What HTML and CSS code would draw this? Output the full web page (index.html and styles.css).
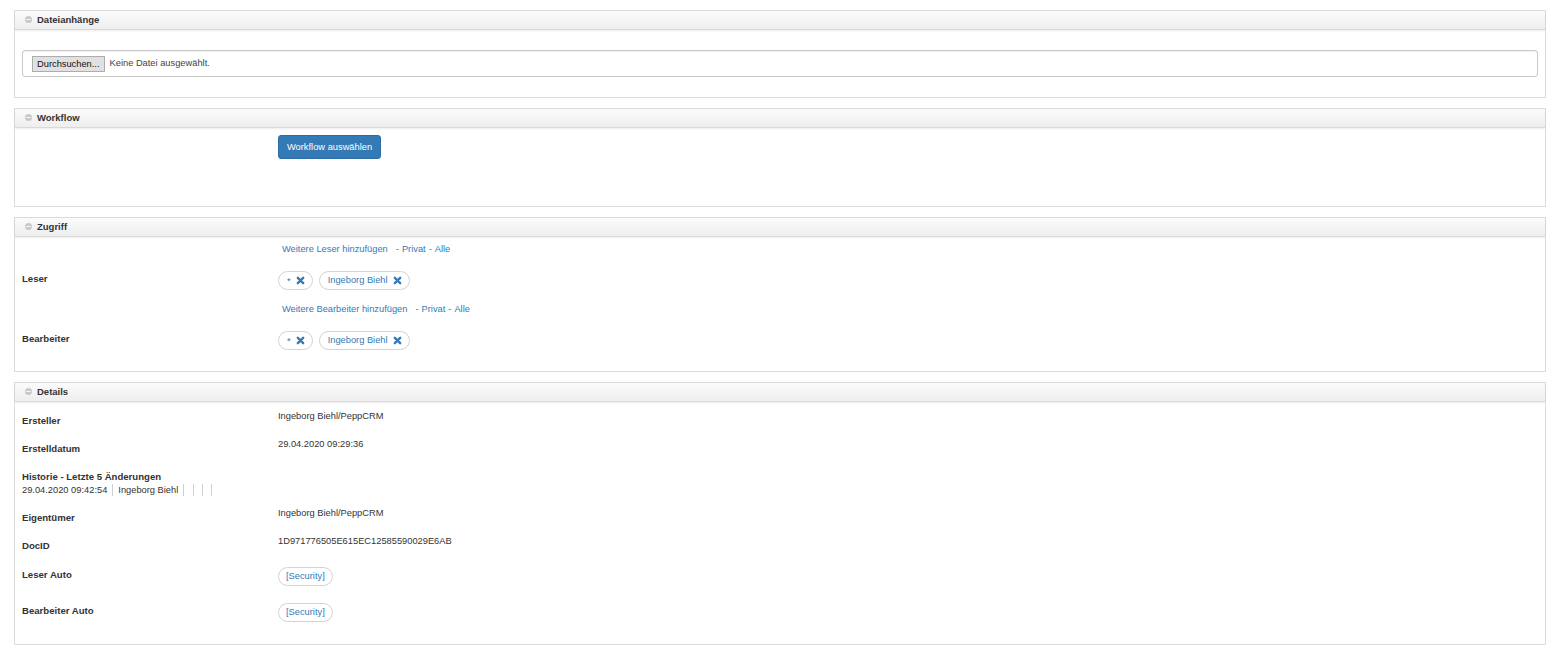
FILE: index.html
```html
<!DOCTYPE html>
<html lang="de">
<head>
<meta charset="utf-8">
<title>Dokument</title>
<link rel="stylesheet" href="styles.css">
</head>
<body>
<div class="page">

  <section class="panel">
    <header class="panel-head"><span class="collapse-icon"></span><span class="panel-title">Dateianhänge</span></header>
    <div class="panel-body body-files">
      <div class="file-box">
        <span class="file-btn">Durchsuchen...</span>
        <span class="file-name">Keine Datei ausgewählt.</span>
      </div>
    </div>
  </section>

  <section class="panel">
    <header class="panel-head"><span class="collapse-icon"></span><span class="panel-title">Workflow</span></header>
    <div class="panel-body body-workflow">
      <div class="field">
        <div class="label"></div>
        <div class="value"><span class="btn-primary">Workflow auswählen</span></div>
      </div>
    </div>
  </section>

  <section class="panel">
    <header class="panel-head"><span class="collapse-icon"></span><span class="panel-title">Zugriff</span></header>
    <div class="panel-body body-access">
      <div class="field access-group">
        <div class="label access-label">Leser</div>
        <div class="value">
          <div class="links"><a class="link">Weitere Leser hinzufügen</a><span class="sep-dash">-</span><a class="link">Privat</a><span class="sep-dash">-</span><a class="link">Alle</a></div>
          <div class="chips">
            <span class="chip"><span class="chip-star">*</span><svg class="x" viewBox="0 0 10 10"><path d="M2 2L8 8M8 2L2 8"/></svg></span>
            <span class="chip">Ingeborg Biehl<svg class="x" viewBox="0 0 10 10"><path d="M2 2L8 8M8 2L2 8"/></svg></span>
          </div>
        </div>
      </div>
      <div class="field access-group second">
        <div class="label access-label">Bearbeiter</div>
        <div class="value">
          <div class="links"><a class="link">Weitere Bearbeiter hinzufügen</a><span class="sep-dash">-</span><a class="link">Privat</a><span class="sep-dash">-</span><a class="link">Alle</a></div>
          <div class="chips">
            <span class="chip"><span class="chip-star">*</span><svg class="x" viewBox="0 0 10 10"><path d="M2 2L8 8M8 2L2 8"/></svg></span>
            <span class="chip">Ingeborg Biehl<svg class="x" viewBox="0 0 10 10"><path d="M2 2L8 8M8 2L2 8"/></svg></span>
          </div>
        </div>
      </div>
    </div>
  </section>

  <section class="panel">
    <header class="panel-head"><span class="collapse-icon"></span><span class="panel-title">Details</span></header>
    <div class="panel-body body-details">
      <div class="field drow">
        <div class="label">Ersteller</div>
        <div class="value">Ingeborg Biehl/PeppCRM</div>
      </div>
      <div class="field drow">
        <div class="label">Erstelldatum</div>
        <div class="value">29.04.2020 09:29:36</div>
      </div>
      <div class="drow history">
        <div class="label">Historie - Letzte 5 Änderungen</div>
        <div class="history-line"><span class="hist-item">29.04.2020 09:42:54</span><span class="hist-item">Ingeborg Biehl</span><span class="hist-item"></span><span class="hist-item"></span><span class="hist-item last"></span></div>
      </div>
      <div class="field drow">
        <div class="label">Eigentümer</div>
        <div class="value">Ingeborg Biehl/PeppCRM</div>
      </div>
      <div class="field drow">
        <div class="label">DocID</div>
        <div class="value">1D971776505E615EC12585590029E6AB</div>
      </div>
      <div class="field drow chiprow">
        <div class="label">Leser Auto</div>
        <div class="value"><span class="chip">[Security]</span></div>
      </div>
      <div class="field drow chiprow">
        <div class="label">Bearbeiter Auto</div>
        <div class="value"><span class="chip">[Security]</span></div>
      </div>
    </div>
  </section>

</div>
</body>
</html>
```

FILE: styles.css
```css
* { box-sizing: border-box; }

body {
  margin: 0;
  background: #fff;
  font-family: "Liberation Sans", Arial, sans-serif;
  font-size: 9.3px;
  line-height: 13px;
  color: #333;
}

.page {
  padding: 10px 15px 0 14px;
}

.panel {
  border: 1px solid #dcdcdc;
  margin-bottom: 10px;
  background: #fff;
}

.panel-head {
  height: 19px;
  display: flex;
  align-items: center;
  padding-left: 10px;
  padding-bottom: 2px;
  background: linear-gradient(#fbfbfb, #eeeeee);
  border-bottom: 1px solid #d9d9d9;
  box-shadow: 0 1px 2px rgba(0, 0, 0, 0.08);
}

.collapse-icon {
  width: 7px;
  height: 7px;
  border-radius: 50%;
  background: #c9c9c9;
  position: relative;
  margin-right: 5px;
  flex: none;
}
.collapse-icon::after {
  content: "";
  position: absolute;
  left: 1px;
  right: 1px;
  top: 3px;
  height: 1px;
  background: #f4f4f4;
}

.panel-title {
  font-weight: bold;
  font-size: 9.5px;
  color: #333;
}

.panel-body {
  padding-left: 7px;
  padding-right: 7px;
}

/* Dateianhänge */
.body-files {
  padding-top: 20px;
  padding-bottom: 20px;
}
.file-box {
  height: 27px;
  border: 1px solid #c8c8c8;
  border-radius: 3px;
  display: flex;
  align-items: center;
  padding-left: 9px;
  box-shadow: inset 0 1px 1px rgba(0, 0, 0, 0.05);
}
.file-btn {
  height: 16px;
  line-height: 14px;
  padding: 0 4px;
  background: #e1e1e1;
  border: 1px solid #adadad;
  color: #111;
  margin-right: 5px;
}
.file-name {
  color: #444;
}

/* Layout rows */
.field {
  display: grid;
  grid-template-columns: 256px 1fr;
}
.label {
  font-weight: bold;
  font-size: 9.6px;
  color: #333;
}

/* Workflow */
.body-workflow {
  padding-top: 7px;
  height: 78px;
}
.btn-primary {
  display: inline-block;
  height: 24px;
  line-height: 22px;
  padding: 0 8px;
  background: #337ab7;
  border: 1px solid #2e6da4;
  border-radius: 3px;
  color: #fff;
}

/* Zugriff */
.body-access {
  padding-top: 6px;
  padding-bottom: 21px;
}
.access-group.second {
  margin-top: 13px;
}
.access-label {
  padding-top: 29px;
}
.links {
  padding-left: 4px;
  height: 13px;
}
.link {
  color: #337ab7;
  text-decoration: none;
}
.sep-dash {
  color: #337ab7;
  margin: 0 3px 0 3px;
}
.links .link:first-child + .sep-dash {
  margin-left: 8px;
}
.chips {
  display: flex;
  gap: 6px;
  margin-top: 15px;
}
.chip {
  display: inline-flex;
  align-items: center;
  height: 19px;
  padding: 0 7px 0 8px;
  border: 1px solid #d3d3d3;
  border-radius: 10px;
  color: #337ab7;
  gap: 5px;
  background: #fff;
}
.chip-star {
  align-self: flex-start;
  margin-top: 3px;
}
.x {
  width: 9px;
  height: 9px;
  flex: none;
}
.x path {
  stroke: #337ab7;
  stroke-width: 2.6;
  stroke-linecap: round;
  fill: none;
}

/* Details */
.body-details {
  padding-bottom: 17px;
}
.drow {
  height: 28px;
}
.drow .label {
  padding-top: 11.5px;
}
.drow .value {
  padding-top: 7.5px;
}
.drow.history {
  height: 41px;
}
.history-line {
  display: flex;
  margin-top: 1px;
}
.hist-item {
  border-right: 1px solid #cfcfcf;
  padding-right: 5px;
  margin-right: 5px;
  height: 12px;
  line-height: 12px;
}
.hist-item:nth-child(n+3) {
  padding-right: 4px;
  margin-right: 4px;
}
.drow.chiprow {
  height: 36px;
}
.drow.chiprow .label {
  padding-top: 13px;
}
.drow.chiprow .value {
  padding-top: 12px;
}
.drow.chiprow .chip {
  padding: 0 7px;
}
```
